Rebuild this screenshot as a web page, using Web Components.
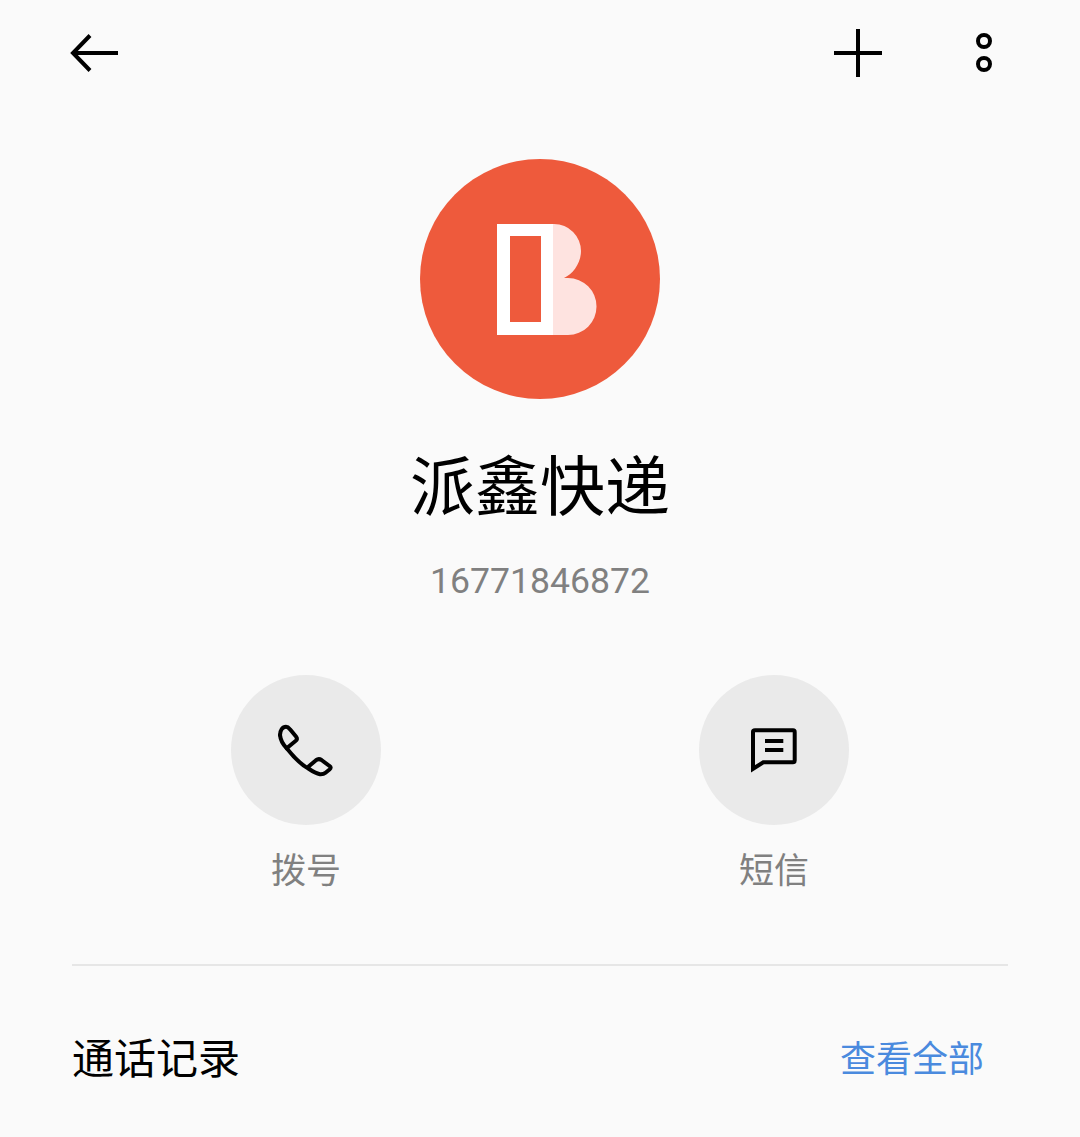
<!DOCTYPE html>
<html lang="zh">
<head>
<meta charset="utf-8">
<title>派鑫快递</title>
<style>
  html, body { margin: 0; background: #fafafa; }
  body { font-family: "Noto Sans CJK SC", "Noto Sans", sans-serif; width: 1080px; height: 1137px; overflow: hidden; }
</style>
</head>
<body>
<contact-page>
  <top-bar></top-bar>
  <contact-head name="派鑫快递" number="16771846872"></contact-head>
  <action-row>
    <action-button label="拨号" icon="phone"></action-button>
    <action-button label="短信" icon="message"></action-button>
  </action-row>
  <section-head title="通话记录" link="查看全部"></section-head>
</contact-page>

<script>
class ContactPage extends HTMLElement {
    connectedCallback() {
        this.attachShadow({ mode: 'open' });
        this.shadowRoot.innerHTML = `
            <style>
                :host { display: flex; flex-direction: column; }
            </style>
            <slot></slot>
        `;
    }
}

class TopBar extends HTMLElement {
    connectedCallback() {
        this.attachShadow({ mode: 'open' });
        this.shadowRoot.innerHTML = `
            <style>
                :host {
                    display: flex;
                    justify-content: space-between;
                    align-items: center;
                    height: 54px;
                    padding: 26px 88px 0 70px;
                }
                svg { display: block; fill: none; stroke: #000; stroke-width: 4; }
                .right { display: flex; align-items: center; gap: 93px; }
            </style>
            <svg width="50" height="40" viewBox="0 0 50 40">
                <path d="M48 20H3M20 2.500 3 20 20 37.500"/>
            </svg>
            <div class="right">
                <svg width="50" height="50" viewBox="0 0 50 50">
                    <path d="M1 25H49M25 1V49"/>
                </svg>
                <svg width="16" height="40" viewBox="0 0 16 40">
                    <circle cx="8" cy="8" r="6"/>
                    <circle cx="8" cy="31" r="6"/>
                </svg>
            </div>
        `;
    }
}

class ContactHead extends HTMLElement {
    connectedCallback() {
        this.attachShadow({ mode: 'open' });
        this.shadowRoot.innerHTML = `
            <style>
                :host { display: flex; flex-direction: column; align-items: center; padding-top: 79px; }
                svg { display: block; }
                .name {
                    margin-top: 35px;
                    font-size: 65px;
                    line-height: 96px;
                    color: #000;
                }
                .number {
                    margin-top: 27px;
                    font-family: Roboto, "Noto Sans", sans-serif;
                    font-size: 35.6px;
                    line-height: 48px;
                    color: #808080;
                }
            </style>
            <svg width="240" height="240" viewBox="0 0 240 240">
                <circle cx="120" cy="120" r="120" fill="#ee5a3c"/>
                <!-- light half of the B mark, behind the outlined stem -->
                <path d="M133 65H134A27 27 0 0 1 161 92C161 104 153 115 144 119H148A28.500 28.500 0 0 1 148 176H133Z" fill="#fee3e0"/>
                <path fill-rule="evenodd" d="M77 65H133V176H77ZM90 77V163H121V77Z" fill="#fff"/>
            </svg>
            <div class="name"></div>
            <div class="number"></div>
        `;
        this.shadowRoot.querySelector('.name').textContent = this.getAttribute('name');
        this.shadowRoot.querySelector('.number').textContent = this.getAttribute('number');
    }
}

class ActionRow extends HTMLElement {
    connectedCallback() {
        this.attachShadow({ mode: 'open' });
        this.shadowRoot.innerHTML = `
            <style>
                :host { display: flex; gap: 318px; padding: 70px 0 0 231px; }
            </style>
            <slot></slot>
        `;
    }
}

const ACTION_ICONS = {
    phone: `<svg width="56" height="56" viewBox="0 0 56 56" fill="none" stroke="#000" stroke-width="4" stroke-linejoin="round" stroke-linecap="round">
        <path d="M2 13C2 8.500 4.500 4.700 8 4.700C10 4.700 11 6 12.200 7.500L18 14.500C19.200 16 19 17.800 17.500 19L8.700 26.300"/>
        <path d="M2 13C2.500 18 5 22.500 8.700 26.300C14 33 22 42 30.300 46.500C34 49 38 51.500 42 52.300C44.500 52.500 46 52 47.500 50.700L51.500 47.500C53.200 46 53 45 51.500 44L43.500 38C41.500 36.700 40 36.700 38 38.200L30.300 44.700"/>
    </svg>`,
    message: `<svg width="56" height="56" viewBox="0 0 56 56" fill="none" stroke="#000" stroke-width="4" stroke-miterlimit="8">
        <path d="M7 46.800V10Q7 8.300 9 8.300H47Q48.700 8.300 48.700 10V38.500Q48.700 40.300 47 40.300H17.300Z"/>
        <path d="M19 19H37.300M19 28H37.300"/>
    </svg>`
};

class ActionButton extends HTMLElement {
    connectedCallback() {
        this.attachShadow({ mode: 'open' });
        this.shadowRoot.innerHTML = `
            <style>
                :host { display: flex; flex-direction: column; align-items: center; width: 150px; }
                .circle {
                    width: 150px;
                    height: 150px;
                    border-radius: 50%;
                    background: #eaeaea;
                    display: flex;
                    align-items: center;
                    justify-content: center;
                }
                .label {
                    margin-top: 18px;
                    font-size: 35px;
                    line-height: 50px;
                    color: #808080;
                }
            </style>
            <div class="circle">${ACTION_ICONS[this.getAttribute('icon')]}</div>
            <div class="label">${this.getAttribute('label')}</div>
        `;
    }
}

class SectionHead extends HTMLElement {
    connectedCallback() {
        this.attachShadow({ mode: 'open' });
        this.shadowRoot.innerHTML = `
            <style>
                :host {
                    display: flex;
                    justify-content: space-between;
                    align-items: center;
                    margin: 71px 72px 0;
                    padding: 59px 24px 0 0;
                    border-top: 2px solid #e6e6e6;
                    height: 60px;
                }
                .title { font-size: 42px; color: #000; }
                .link { font-size: 36px; color: #4a8ade; padding-top: 2px; }
            </style>
            <span class="title">${this.getAttribute('title')}</span>
            <span class="link">${this.getAttribute('link')}</span>
        `;
    }
}

customElements.define('contact-page', ContactPage);
customElements.define('top-bar', TopBar);
customElements.define('contact-head', ContactHead);
customElements.define('action-row', ActionRow);
customElements.define('action-button', ActionButton);
customElements.define('section-head', SectionHead);
</script>
</body>
</html>
